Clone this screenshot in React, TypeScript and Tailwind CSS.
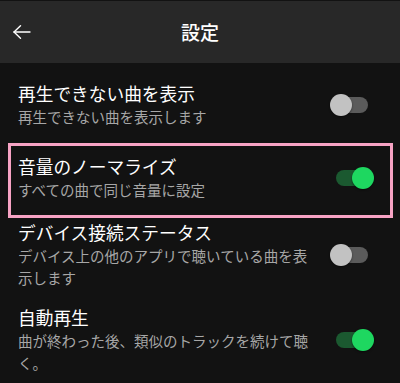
import React from 'react';

type Item = {
  title: string;
  sub: string;
  on: boolean;
};

function Toggle({ on }: { on: boolean }) {
  return (
    <div className="relative w-[44px] h-[22px] shrink-0">
      <div
        className={
          'absolute left-[6px] right-[6px] top-[3px] h-[16px] rounded-full ' +
          (on ? 'bg-[#1b5930]' : 'bg-[#5b5b5b]')
        }
      />
      <div
        className={
          'absolute top-0 w-[22px] h-[22px] rounded-full shadow-[0_1px_2px_rgba(0,0,0,0.5)] ' +
          (on ? 'right-0 bg-[#1ed760]' : 'left-0 bg-[#c2c2c2]')
        }
      />
    </div>
  );
}

function Row({ item }: { item: Item }) {
  return (
    <div className="flex items-center">
      <div className="flex-1 mr-[16px]">
        <div className="text-[17.7px] leading-[24px] text-white">{item.title}</div>
        <div className="mt-px text-[14.5px] leading-[22px] text-[#a7a7a7]">{item.sub}</div>
      </div>
      <Toggle on={item.on} />
    </div>
  );
}

export default function App() {
  const items: Item[] = [
    { title: '再生できない曲を表示', sub: '再生できない曲を表示します', on: false },
    { title: '音量のノーマライズ', sub: 'すべての曲で同じ音量に設定', on: true },
    { title: 'デバイス接続ステータス', sub: 'デバイス上の他のアプリで聴いている曲を表示します', on: false },
    { title: '自動再生', sub: '曲が終わった後、類似のトラックを続けて聴く。', on: true },
  ];

  return (
    <div
      className="w-[400px] h-[383px] overflow-hidden bg-[#121212] pt-px"
      style={{ fontFamily: '"Noto Sans CJK JP", "Noto Sans", sans-serif' }}
    >
      <header className="h-[62px] bg-[#282828] flex items-center relative">
        <button className="ml-[13px] text-white">
          <svg width="18" height="14" viewBox="0 0 18 14" fill="none" stroke="currentColor" strokeWidth="1.4" strokeLinecap="round">
            <path d="M1 7h16" />
            <path d="M7.5 0.8L1 7l6.5 6.2" />
          </svg>
        </button>
        <h1 className="absolute left-0 right-0 text-center text-[19px] font-medium text-white pointer-events-none">
          設定
        </h1>
      </header>

      <div className="pt-[18px] pb-[15px] pl-[18px] pr-[26px]">
        <Row item={items[0]} />
      </div>

      <div className="mx-[8px] w-[385px] border-[3px] border-[#f7a3c4] pt-[8px] pb-[14px] pl-[7px] pr-[16px]">
        <Row item={items[1]} />
      </div>

      <div className="pt-[2px] pb-[16px] pl-[18px] pr-[26px]">
        <Row item={items[2]} />
      </div>

      <div className="pl-[18px] pr-[26px]">
        <Row item={items[3]} />
      </div>
    </div>
  );
}
